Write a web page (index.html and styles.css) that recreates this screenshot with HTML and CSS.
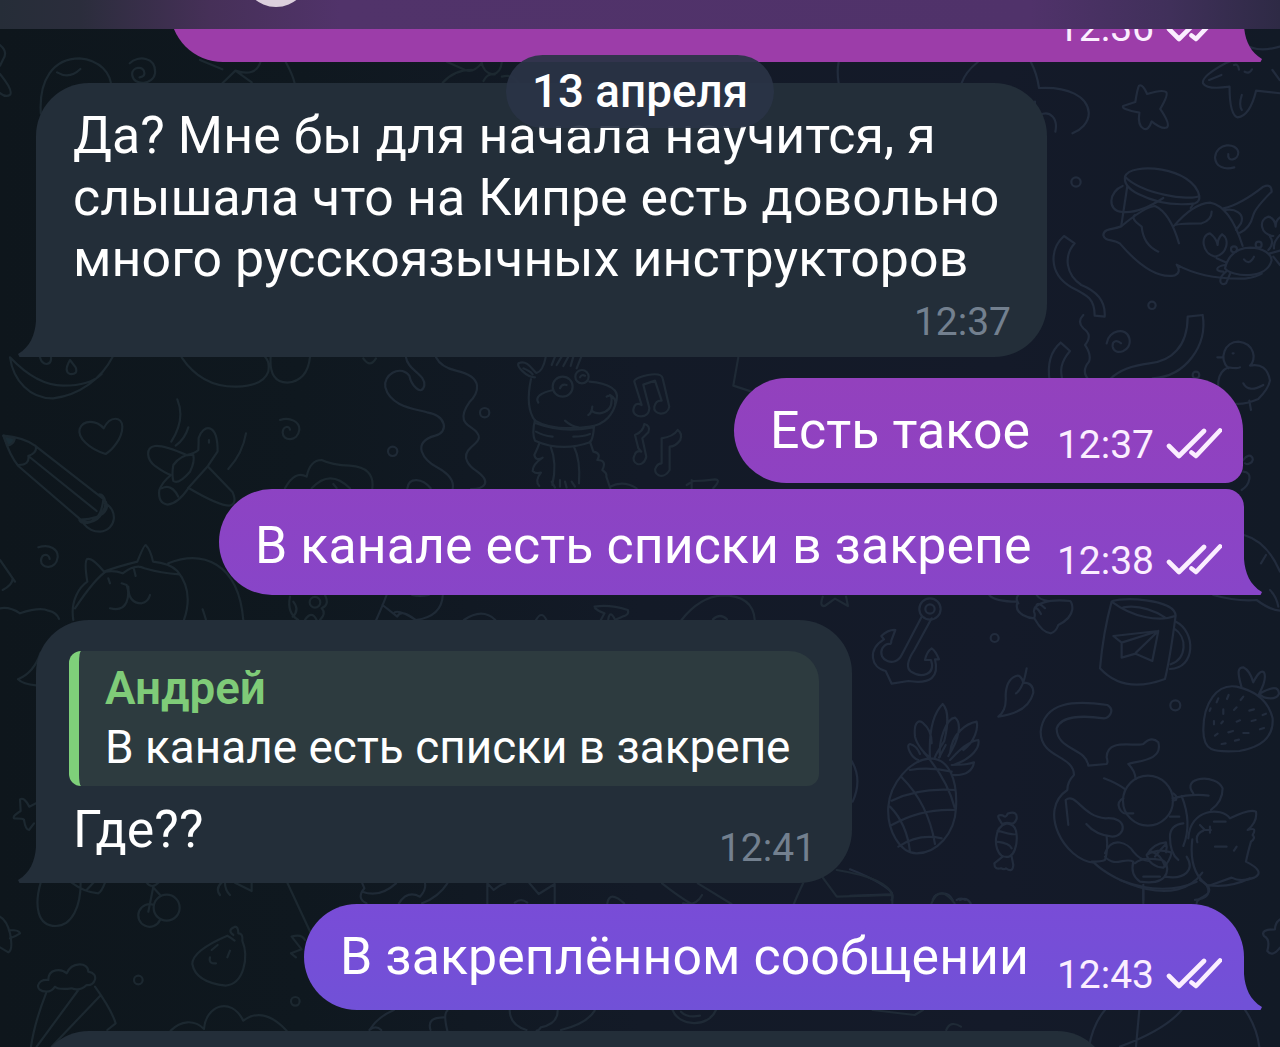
FILE: index.html
```
<!DOCTYPE html>
<html lang="ru">
<head>
    <meta charset="UTF-8">
    <meta name="viewport" content="width=device-width, initial-scale=1.0">
    <title>Чат</title>
    <link rel="stylesheet" href="styles.css">
</head>
<body>
    <svg class="wallpaper" viewBox="0 0 1280 1047">
        <!-- top strip -->
        <g transform="scale(.408 .3333)">
            <path d="M0 135q20 20 8 42l-8 20M0 222q32 48 25 62q-10 10-25-5M100 340C95 240 130 175 195 175c50 5 78 45 78 90M140 217q30 22 57-10M318 190c20-25 65-20 62 30c-5 35-52 40-56 5c-2-25 30-30 30-5q0 10-12 12"/>
            <path d="M490 180l55 28M545 250l32-38l40 35M577 212q50 20 62-28M700 185q18 40 22 64M1095 185l45 25q20 10 40-20M1085 248q30-40 75-38M1180 185q5 35 28 38q20-5 22-38M1185 243q10-25 28-20M1230 230q25-10 40 18"/>
        </g>
        <g class="right" transform="translate(640 0) scale(.408 .3333)">
            <path d="M487 185q-5 30 0 65M788 250q10-35 40-64M958 186q15 35 20 78c70-5 120 25 122 75c0 30-20 51-40 61M980 345c25-15 45 10 38 50M968 305v20"/>
            <path d="M1223 257q10-5 20 25q40-15 47-5q5 8-15 50q25 45 17 55q-12 8-38-18q-8 30-20 22q-15-10-10-48q-45-10-40-20l30-12q5-40 9-49z"/>
            <path d="M1480 130q30 30 88 10M1380 250q-5-20 55-60l40-20M1380 250q10 20 65 10q0 85 20 92q30-5 45-80l60 8M1475 285q-8 30 0 45M1395 240l30-15M1456 195q10-5 12 14M1482 215q12 8 18-7M1550 210l18 30"/>
        </g>
        <!-- seal, crab and ribbons -->
        <g class="right" transform="translate(1040 80) scale(.3333)">
            <path d="M565 222c-5 25 30 20 30-5c-5-30-65-30-70 15c2 30 30 38 58 30"/>
            <circle cx="108" cy="306" r="14"/><circle cx="336" cy="676" r="11"/><circle cx="468" cy="885" r="10"/>
            <path d="M255 290c15-45 205-30 223 58c-30 15-170-5-223-58q-5 30 40 52q80 40 170 28q15-5 13-22M262 318l-18 118M248 318c-40 15-50 75 0 78q50 5 122-42M460 372l-8 12"/>
            <path d="M245 438c-15 10-55 5-55 28c5 20 30 10 50 25q95 110 165 95q20-10 5-32q80 45 205 42q35-5 50-15M245 438q70-58 100-60q45 20 72 112M285 405q-15 10 20 35q5 55 50 75M400 440q60-70 110-72q60 10 98 130M400 440q0-10 85-10q30-10 30-35M550 385q50-10 120-65q25-10 25 15q-50 50-55 70q-10 40-40 53M555 390c30-5 60 10 48 40l-15 20"/>
            <path d="M555 565q15-60 75-62c40 0 65 20 65 38c-15 60-120 50-140 24M612 538q15 20 30-8M525 530c-40-10-45-65-15-70q20 15 23 35q0-20 13-32c25 15 15 60-21 67zM700 468c-40-5-45-50-15-58q20 5 22 30q0-20 13-28M530 535l30 13M555 555c-30 5-30 20-5 20M558 575c-25 20-20 45 0 35l12-28M690 470q15 20-5 40M720 465q-20 20-18 40M690 520l30-8M700 530l20 25"/>
            <circle cx="582" cy="508" r="9"/><circle cx="656" cy="494" r="9"/>
            <path d="M72 468l32 22c-35 40-25 95 20 125q75 30 70 95l-30-3c0-50-20-60-70-85c-75-45-60-120-22-154zM130 705q-20 20 0 40q30 20 5 50q20 30 12 50q-25 30 0 55M200 790c5-40 60-50 68-15c10 40-45 55-50 25c-2-20 15-20 25-10"/>
            <path d="M62 788l28 25c-30 35-30 60-22 90M62 788c-35 30-40 70-33 115M443 710l45-5c15 90-50 185-150 190M443 710c0 90-50 135-115 140q-80 10-115 45"/>
            <path d="M565 865c-30-30-10-80 30-80c50 5 55 55 35 72q50-10 60 45q-5 25-35 55q-70 30-105 0c-25-30-20-80 15-95q30 5 35 0M532 832h18M578 820h3M610 910q15 30 60 5M628 962l5 28"/>
        </g>
        <!-- pencil, heart, plane, cat -->
        <g transform="translate(0 340) scale(.3333)">
            <path d="M30 52c10 70 60 125 130 123c80-10 145-60 178-125M30 52q80 85 160 85q80 0 115-35M120 52q5 20 20 20q15-2 13-20M210 60q-20 35 0 42q25 2 17-20zM545 52q60 90 165 88q80-2 95-45q5-30-10-45M812 52q-5 75 50 76q60-5 68-76M1090 55q20 30 38 0"/>
            <path d="M10 287q60 5 95 30l205 160c25 20 10 60-68 62L55 378q-25-30-45-91zM85 348l205 165M55 375q35 0 30-27q28-10 22-30M295 465c10-10 35 20 10 55c-10 25-60 40-67 20c35 15 65 0 72-60M315 490c40 20 35 80-15 85q-30 0-50-25"/>
            <path class="tip" d="M10 287l35 8q-5 20-22 22z"/>
            <path d="M317 342c-50-15-85-50-78-75c10-28 50-28 72-2c20-40 55-35 56-5c0 35-30 70-50 82z"/>
            <path d="M532 178q25 60-18 127M565 262q-10 35-38 55M738 280q-10 60-53 107M840 240c30-10 60 5 58 30c-5 35-50 35-50 7c2-20 20-20 22-8"/>
            <path d="M595 330q-10 10-35 15q-70-30-95-27c-30 5-25 40 0 60q30 22 48 27q-25 20-35 45q-5 40 25 44q30-2 63-50q90 53 122 53q25-5 10-40l-75-78l30-45c0-90-45-80-57-40q0 20-1 36z"/>
            <path d="M520 375q25-35 60-30q5 20-10 50q-35 40-50 28q-5-20 0-48zM622 380l-58 65M485 445q30-15 50 25M627 300v8"/>
            <path d="M855 445q30-55 65-35q10-50 45-50q30 15 85 17q75 5 67 68M935 445q55-60 115 0M1000 432l10 12M115 622c35-10 60 5 58 30c-5 38-50 35-50 10c2-25 25-20 26-5M0 660l45 65M8 750q30-15 30-35"/>
            <path d="M220 840C210 780 240 740 262 725q-10-60 0-68q15-5 50 38q40-15 100-30q20-50 25-50q15 15 22 50q50 5 73 28q50 60 20 147M318 695q25-5 50 5q40-30 65-15q50 15 105 18M225 805q60-90 95-112M505 670c100-40 210-5 225 170M330 805c55 15 60-40 50-70l-15-5M385 740q0 50 40 50q20-5 25-25M325 715l5 15M402 688l5 20M608 808q10 30 10 32M0 805q30-5 60 15q60-20 85-8q25 5 32 25"/>
            <path d="M870 770q-10 50 25 70M880 785q20 25-2 45M975 765q15 30-10 40q15 15-5 35"/><circle cx="945" cy="787" r="16"/><path d="M915 840q20-30 35 0"/>
        </g>
        <!-- swirls, llama, notes -->
        <g class="middle" transform="translate(380 340) scale(.3333)">
            <path d="M78 52c5 40 60 50 55 85c-10 35-40-5-45-30c-30-35-80 0-72 35c15 60 95 65 125 75c60 10 65 60 25 70c-75 20-35 75 5 95q55 30 47 65M168 52q15 30 60 40c90 20 65 70 40 95c-35 50-10 65 5 75c45 30 15 45 0 60c-35 30 0 60 15 70c50 35 25 55-15 55M82 445c5-35 45-30 70 0"/>
            <circle cx="314" cy="218" r="14"/><circle cx="38" cy="334" r="14"/>
            <circle cx="548" cy="140" r="30"/><circle cx="606" cy="110" r="20"/>
            <path d="M540 145q5-15 20-10M600 112q5-10 15-5M465 112c-25 0-60-35-48-43c25-10 40 20 52 30q20-5 28-47M430 85q20 8 28 18M515 75l10-25M530 75l15-25M550 78l15-28M572 78l8-28M590 85l14-35M628 125c60 5 90 25 82 55q-15 70-80 80q-110 15-165-18q-30-40-12-125M475 188q-15-25 45-38M680 170q15-10 15 10q0 35-35 40q-20 0-25-10M625 225q10-5 12-25M555 242q20 18 40 20M690 165q20 10 15 30"/>
            <path d="M465 240q-10 40 0 62q80 35 165 5q10-10 12-48M468 250q80 30 170 12M468 275q20 12 50 15M580 290q30 0 50-8M478 310q-5 15-15 35q5 20 25 8q-30 20-30 40q10 10 25 5q-20 25-5 40M512 320q20 50 5 115M582 320q20 40 15 110M630 305l10 30q25 5 12 25q30 0 15 30q15 10 12 20l12 35M515 425l10 18M540 420v20M555 425l5 18M575 425l10 15M690 440q40-20 80 5"/>
            <path d="M785 195l-22-70c0-15 80-35 85-10l20 85c-5 30-50 25-45 0q5-20 22-18l-20-60l-35 12l18 70c0 35-50 30-48 5q5-25 25-14zM775 325l-10-40q25-10 28-33q20 5 12 25l-18 18l12 55c-10 40-50 20-35-5q5-15 20-10zM845 370v-75q35-5 48-25q15 10 8 30q-15 20-32 20v70c-20 35-55 10-40-10q5-10 16-10zM920 435l20-12q30 0 65-5q15 0 5 15l-10 12M935 420v25M1075 52l-15 85l55 18"/>
        </g>
        <!-- right side, between the purple bubbles -->
        <g class="right" transform="translate(1040 370) scale(.3333)">
            <path d="M610 270c20-30 40 0 20 10q-10 5-15 0M610 305c30 0 20 40-5 55M612 495q70 20 108 110M678 555l-15 25"/>
        </g>
        <!-- anchor, mug, pineapple, strawberry, big cat -->
        <g class="right" transform="translate(850 590) scale(.3333)">
            <circle cx="240" cy="57" r="32"/><circle cx="240" cy="57" r="14"/>
            <path d="M215 80l-60 115c-20 40-75 15-58-20q10-15 22-13q5 0 5-10l12-32q-20-2-42 18l8 10c-50 30-40 85 5 95l18 38l50-8q100 15 80-65h12q-10-25-22-33q-15 10-20 35h18c15 45-30 55-60 35c-20-15 0-50 10-65l52-95"/>
            <circle cx="434" cy="144" r="12"/><circle cx="976" cy="346" r="15"/>
            <path d="M418 15q15 20 85 20c-15 40 40 50 50 50q25 45 50 45q15-5 22-25c60-30 40-70 35-72q-50-5-80 5q-30 10-28 27q5 10 0 20M553 60q5-15 20 12M560 45q5-10 25 10M505 15q-10 10 0 25M560 15q10 15 35 18M530 235q-10 60-32 75M498 258q15-5 22 20q30 0 30 30q-15 60-105 72q25-20 22-60q0-50 31-62z"/>
            <path d="M785 35q-25 90-35 200c50 55 120 60 195 32q15-60 32-190c-50 20-130 5-192-42zM785 35c20-15 190-10 192 42M820 52q60-10 125 30M978 95c60 30 60 140-18 142M972 115c40 25 40 90-10 108M790 138l135-15l-18 90l-50-22l-42 12v-45zM925 123l-110 35M925 123l-67 65"/>
            <path d="M240 505c-60 5-120 75-125 145c-5 70 35 140 85 140c60 0 115-60 118-135c5-85-20-150-78-150zM180 540q60-10 125 5M125 632q80-40 192-32M125 705q90-50 190-45M145 770q60-40 130-25M155 562q80 80 100 200M120 650q50 50 60 135M222 488q70 80 92 165"/>
            <path d="M240 505c-5-100 15-140 38-163c20 20 15 70 5 110c-10 20-25 35-30 55M240 500c-10 0-40-35-45-60c-5-50 15-50 25-40q25 20 25 60M270 500c-5-50 20-115 45-117c20 15 15 60-20 115M300 490c5-60 50-90 80-95c5 20-5 60-40 85M300 510c20-20 50-55 85-60c5 20-15 55-75 75M305 525q50 0 67-8c-5 30-30 40-65 38M205 510c-20-5-40-45-25-48q20 5 30 30M287 465l-20 38"/>
            <path d="M470 700c-40 10-40 80-15 97c40 20 50-40 43-75q-5-20-28-22zM448 688q-10-15 10-12q10 10 15-5q30-10 27 15q-5 15-15 15q-20-5-28 2zM458 800l-25 20q0 20 20 15q10 5 15 0q20 15 22-10l-5-25M443 722q50 15 55 10M440 755q40 5 45 20"/>
            <path d="M1060 420c0-80 40-140 100-130q90 20 108 95q5 80-100 98c-80 5-108 0-108-63zM1175 292c-15-50-10-60 5-60q20 10 30 45q20-40 32-30q10 20-15 65q60-35 60 0q-10 20-45 10l-15-10"/>
            <path d="M1105 325l-5 12M1136 315l-5 12M1180 320l-8 10M1120 358v14M1160 352l-8 8M1198 362l14-4M1238 375l10-4M1092 393v10M1114 400l5-6M1160 395l10-4M1205 393l12-3M1095 437l8-6M1135 427l14-4M1180 429h16M1230 418l12-4M1115 462l12-2M1155 452l12-3M1082 355l-3 8"/>
            <path d="M672 555c0-60-100-50-100-130c10-90 100-95 200-80c25 15 5 40-10 40c-70-10-130-5-142 30c0 65 90 60 95 112l55-5q5-5 0-20c0-60 90-30 110-40q25-25 45-5c15 55-60 55-90 65q20 20 22 45M672 555q-20 20-20 45c-90 60-10 210 80 218c60 60 250 140 325 30M762 565q40 15 62 32"/>
            <circle cx="894" cy="632" r="75"/>
            <path d="M655 705l-8-75c30-25 50 50 120 55c70-5 60 55 20 55q-50-5-78-38M770 740q5 40-5 70q-10 5-40 5M765 790c20-55 70-30 85-5q20 25 45 28M765 800c30 35 60 0 85 15q-10 40 20 60c100 15 90-60 65-65q-60-10-80 10M880 860h50M945 860c60 10 90-20 65-60M970 610q15 10 8 20l-10 2M968 625q60-15 108-8M1030 610c-40-50 70-60 88-15q0 40-35 65M1000 768c20-50 15-100-5-150M960 680h28M820 625c-30 15-5 50 10 45h20M1000 700q-40 5-40 40q0 50 25 70"/>
            <path d="M890 795q20-35 58-38q5 15 0 30M890 795q10 35 50 38q20-20 25-45q-40-15-75 7M905 785q30 10 40 45M915 800q15-20 30-35"/>
            <path d="M1015 745c5-90 100-95 125-60q60-30 78-20q5 30-25 55q30-10 15 15q10 10-5 20q-10 35-15 60q60 30 25 48q-40 15-68 0l-70 25q-60-40-48-140M1092 695h35M1095 770h35M1160 770l-8 12M1050 705l15 15h18M1080 710v18M1060 722q-25 10-18 35M1070 885q20 40-35 45M880 885v45M0 838q100 40 125 70q5 15 0 22M0 918l125-5M0 505q40 60 8 130M248 930q5-20 30-20q20 0 30 20M320 930q15-8 25 0"/>
            <path d="M1090 15q70 20 130 15q40 30 70 32M1260 0q20 20 25 50"/>
        </g>
        <!-- left side -->
        <g transform="translate(0 590) scale(.3333)">
            <path d="M122 188q-20 60-68 80q15 15 54 18M108 640l-20 10q-15-30-28-22l2 35q-25 15-20 22q30 0 30 5q5 30 15 30l15-20"/>
        </g>
        <g class="middle" transform="translate(290 590) scale(.37 .3333)">
            <path d="M233 90q20-50 28-75M250 45l40 35q10-25 50 10M280 70q10-15 60 20q70-10 73-75M330 15q20 5 45 0M470 90q50-38 85 0M665 90q15-30 28 0M823 50q40-8 90 10q5 15-15 20l-20 10M825 55q10 10 25 15l-10 20M860 88q5-30 18 0M1058 90q50-70 110-74c50 0 85 20 88 74M1143 88q20-20 38 0M1440 20q-10 30 5 28l28-22l35 22l-5-28"/>
        </g>
        <!-- bottom strip -->
        <g transform="translate(0 870) scale(.3333)">
            <path d="M122 38c-20 70-10 130 45 130c50 0 75-60 75-130M215 38q40 30 80 32q10-5 20-32M260 60l20-22M460 50l-15 75M458 50l25 28M440 38q15 20 35 0M660 75q-15-20 5-37M690 75q-15-15-15-37M705 38l50 25v-25M862 38l70 150M875 200q30-10 40 10M875 200l30 38l-32 12l15 12M0 140q20 10 30 50q10 50-5 57l-25-15M28 180q30 0 32 10q-15 10-30 15"/>
            <circle cx="500" cy="113" r="39"/><path d="M462 105a34 34 0 1 0 18 45"/>
            <circle cx="415" cy="330" r="13"/><circle cx="886" cy="394" r="13"/>
            <path d="M700 195q-20-15 5-25q10 0 10 20q15 0 12 22c20 50 5 130-50 135q-90-10-100-65q0-40 105-85q10 5 22 15M635 240l18-15M690 242l-8 20M630 262q-5 20 18 18"/>
            <path d="M140 365c-40 0-30-40 5-35c0-35 40-35 55-20c15-35 65-35 65-5c35 5 20 45-5 40q-20 20-45 10q-40 5-50-5q-10 15-25 15zM138 370q-35 90-45 160M235 360L110 530M300 378L155 530M285 350q50 70 62 110l-25 20M512 482c30-30 70-35 100-5c5-70 80-100 118-25q60-45 130 30"/>
        </g>
        <g class="middle" transform="translate(300 870) scale(.421 .3333)">
            <path d="M148 40l5 15q-20 30 5 45M148 65q40 20 80-25M350 40q-20 40-60 60M235 100q20-40 50-20q15-20 12-40M445 40v62M445 40l15 20q20-20 28-20M545 40l22 32l38-30v60M510 98q15-15 30 0M730 100q5-40 40 0M860 40q40 40 70 62M945 40l80 62M910 100q30 10 45-25M1195 40q-15 40-22 62M1240 20l35 60l130-5M1275 0q120 25 132 75v25M1500 100q20-60 55 0"/>
            <path d="M165 480q20-40 58-60M165 480q15-15 28 0M350 482q-10-50 0-60M310 480q-10-40 35-38M498 420q0 45 40 60M612 422q0 40-40 50q-5 10-10 10M700 422q-20 40-80 58M885 420c15 50 85 55 103 0M905 425q15 20 45 12M1360 420l100 15l20-15M1535 480q10-30 35-10"/>
        </g>
        <g class="right" transform="translate(960 880) scale(.3333)">
            <path d="M550 20v50M480 0q130 50 230 5M720 0q50 30 10 50q-20 10-20 20M740 15q70 10 130-20M960 118q-15 10-15 30q-45 0-33 20q20 10 10 45q15 20 38-10M435 390q-35 40-48 110M538 390l-10 110M665 390q-50 60-185 110M855 390q35 50 43 110M0 60q20-10 32 10"/>
        </g>
    </svg>

    <header class="topbar">
        <div class="avatar"></div>
    </header>

    <main class="chat">
        <div class="msg out first">
            <div class="text"></div>
            <div class="time">12:36</div>
            <svg class="checks" viewBox="0 0 56 32"><path d="M3 18l10 10l25-25M25.500 24.500l4.500 3.500l24-25.500"/></svg>
            <svg class="tail" viewBox="0 0 20 36"><path d="M0 0h1c1 14 6 26 18 33l-1.500 3h-17.500z"/></svg>
        </div>

        <div class="msg in question">
            <div class="text">Да? Мне бы для начала научится, я<br>слышала что на Кипре есть довольно<br>много русскоязычных инструкторов</div>
            <div class="time">12:37</div>
            <svg class="tail" viewBox="0 0 20 36"><path d="M20 0h-1c-1 14-6 26-18 33l1.500 3h17.500z"/></svg>
        </div>

        <div class="msg out yes">
            <div class="text">Есть такое</div>
            <div class="time">12:37</div>
            <svg class="checks" viewBox="0 0 56 32"><path d="M3 18l10 10l25-25M25.500 24.500l4.500 3.500l24-25.500"/></svg>
        </div>

        <div class="msg out lists">
            <div class="text">В канале есть списки в закрепе</div>
            <div class="time">12:38</div>
            <svg class="checks" viewBox="0 0 56 32"><path d="M3 18l10 10l25-25M25.500 24.500l4.500 3.500l24-25.500"/></svg>
            <svg class="tail" viewBox="0 0 20 36"><path d="M0 0h1c1 14 6 26 18 33l-1.500 3h-17.500z"/></svg>
        </div>

        <div class="msg in where">
            <div class="quote">
                <div class="quote-name">Андрей</div>
                <div class="quote-text">В канале есть списки в закрепе</div>
            </div>
            <div class="row">
                <div class="text">Где??</div>
                <div class="time">12:41</div>
            </div>
            <svg class="tail" viewBox="0 0 20 36"><path d="M20 0h-1c-1 14-6 26-18 33l1.500 3h17.500z"/></svg>
        </div>

        <div class="msg out pinned">
            <div class="text">В закреплённом сообщении</div>
            <div class="time">12:43</div>
            <svg class="checks" viewBox="0 0 56 32"><path d="M3 18l10 10l25-25M25.500 24.500l4.500 3.500l24-25.500"/></svg>
            <svg class="tail" viewBox="0 0 20 36"><path d="M0 0h1c1 14 6 26 18 33l-1.500 3h-17.500z"/></svg>
        </div>

        <div class="msg in next"></div>
    </main>

    <div class="date">13 апреля</div>
</body>
</html>
```
FILE: styles.css
```
* {
    box-sizing: border-box;
}
body {
    margin: 0;
    height: 1047px;
    position: relative;
    overflow: hidden;
    display: flex;
    flex-direction: column;
    font-family: Roboto, "Noto Sans", sans-serif;
    color: white;
    background: linear-gradient(to right, #0e161c 0, #0f181f 300px, #131a27 640px, #141a29 1000px, #121a26 1280px);
}
.wallpaper {
    position: absolute;
    top: 0;
    left: 0;
    width: 1280px;
    height: 1047px;
    stroke: #1c2830;
}
.wallpaper .middle {
    stroke: #1f2a36;
}
.wallpaper .right {
    stroke: #222c3d;
}
.wallpaper path, .wallpaper circle {
    fill: none;
    stroke-width: 2.2;
    stroke-linecap: round;
    stroke-linejoin: round;
    vector-effect: non-scaling-stroke;
}
.wallpaper .tip {
    fill: #1b2c35;
}
.topbar {
    flex: none;
    height: 29px;
    padding-left: 243px;
    overflow: hidden;
    position: relative;
    z-index: 2;
    background: linear-gradient(to right, #262d38 0, #2b2d3c 80px, #463058 210px, #51336a 340px, #50326a 1030px, #40305a 1170px, #2e2a45 1280px);
}
.avatar {
    width: 66px;
    height: 66px;
    margin-top: -59px;
    border-radius: 50%;
    background: #ddd0dd;
}
.chat {
    flex: 1;
    min-height: 0;
    overflow: hidden;
    display: flex;
    flex-direction: column;
    position: relative;
}
.msg {
    flex: none;
    position: relative;
    border-radius: 53px;
}
.text {
    font-size: 51.8px;
    line-height: 61.5px;
    letter-spacing: 0.1px;
    white-space: nowrap;
}
.time {
    font-size: 39px;
    line-height: 40px;
    white-space: nowrap;
}
.tail {
    position: absolute;
    bottom: 0;
    width: 20px;
    height: 36px;
}

/* outgoing */
.out {
    align-self: flex-end;
    display: flex;
    height: 106px;
    margin-right: 36px;
    padding: 22px 22px 0 36px;
    border-bottom-right-radius: 0;
}
.out .text {
    flex: 1;
}
.out .time {
    margin: 30px 12px 0 0;
    color: #fbeeff;
}
.out .tail {
    right: -19px;
}
.out .checks {
    width: 56px;
    height: 32px;
    margin-top: 33px;
}
.checks path {
    fill: none;
    stroke: #fbeeff;
    stroke-width: 4.6;
    stroke-linecap: round;
    stroke-linejoin: round;
}
.first {
    width: 1074px;
    margin-top: -73px;
    background: #9c3da9;
}
.first .tail {
    fill: #9c3da9;
}
.yes {
    width: 509px;
    height: 105px;
    margin: 21px 37px 0 0;
    padding: 22px 21px 0 36px;
    border-bottom-right-radius: 18px;
    background: linear-gradient(#9341bd, #8e42c2);
}
.yes .time {
    margin-top: 25px;
}
.yes .checks {
    margin-top: 28px;
}
.lists {
    width: 1025px;
    margin-top: 6px;
    padding-top: 26px;
    border-top-right-radius: 18px;
    background: linear-gradient(#8d43c3, #8845c8);
}
.lists .time {
    margin-top: 26px;
}
.lists .checks {
    margin-top: 29px;
}
.lists .tail {
    fill: #8845c8;
}
.pinned {
    width: 940px;
    margin-top: 21px;
    background: linear-gradient(#794cd7, #7151d7);
}
.pinned .time {
    margin-top: 29px;
}
.pinned .checks {
    margin-top: 32px;
}
.pinned .tail {
    fill: #7151d7;
}

/* incoming */
.in {
    display: flex;
    flex-direction: column;
    margin-left: 36px;
    border-bottom-left-radius: 0;
    background: #232e39;
}
.in .time {
    color: #73808f;
}
.in .tail {
    left: -19px;
    fill: #232e39;
}
.question {
    width: 1011px;
    height: 274px;
    margin-top: 21px;
    padding: 22px 36px 0 37px;
}
.question .time {
    align-self: flex-end;
    margin-top: 12px;
}
.where {
    width: 816px;
    height: 263px;
    margin-top: 25px;
    padding: 31px 33px 0;
}
.quote {
    height: 135px;
    padding: 9px 0 0 26px;
    border-left: 10px solid #7fd07a;
    border-radius: 12px 30px 12px 12px;
    background: #2d3b3f;
    white-space: nowrap;
}
.quote-name {
    font-size: 45.8px;
    line-height: 58px;
    font-weight: 600;
    color: #7fcb78;
}
.quote-text {
    font-size: 45.9px;
    line-height: 59px;
}
.row {
    display: flex;
    justify-content: space-between;
    padding: 13px 3px 0 4px;
}
.row .time {
    margin-top: 29px;
}
.next {
    width: 1074px;
    height: 106px;
    margin-top: 21px;
}

.date {
    position: absolute;
    z-index: 3;
    top: 55px;
    left: 506px;
    width: 268px;
    height: 73px;
    border-radius: 37px;
    text-align: center;
    font-size: 45.8px;
    font-weight: 500;
    line-height: 74px;
    background: rgba(42, 52, 70, 0.93);
}
```
